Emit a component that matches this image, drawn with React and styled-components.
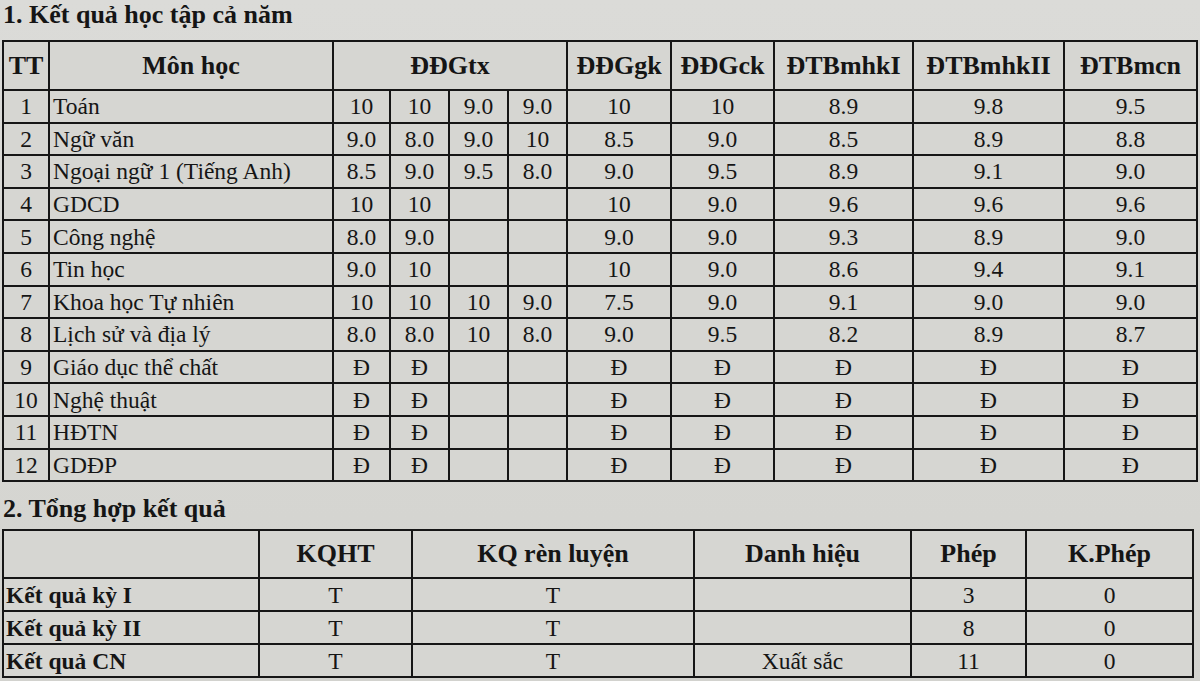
import React from 'react';
import styled, { createGlobalStyle } from 'styled-components';

const GlobalStyle = createGlobalStyle`
  html, body {
    margin: 0;
    padding: 0;
    background: #d8d8d4;
  }
  body {
    font-family: "Liberation Serif", "Times New Roman", serif;
    color: #151515;
    height: 681px;
    overflow: hidden;
  }
`;

const serif = `"Liberation Serif", "Times New Roman", serif`;

const Page = styled.div`
  display: flex;
  flex-direction: column;
  padding: 0 0 0 2px;
  background: linear-gradient(180deg, #dbdbd8 0%, #d7d7d3 60%, #d2d2ce 100%);
  height: 681px;
`;

const Title = styled.h2`
  margin: ${p => p.$top || 0}px 0 0 1px;
  font-family: ${serif};
  font-size: 26px;
  line-height: 30px;
  font-weight: bold;
  height: 30px;
`;

const Table = styled.table`
  border-collapse: collapse;
  table-layout: fixed;
  width: ${p => p.$width}px;
  margin-top: ${p => p.$top}px;
  background: #d6d6d2;
  font-family: ${serif};
  color: #151515;
`;

const Row = styled.tr`
  height: ${p => p.$h}px;
`;

const Th = styled.th`
  border: 2px solid #161616;
  font-family: ${serif};
  font-size: 26px;
  font-weight: bold;
  padding: 0;
  text-align: center;
  white-space: nowrap;
  overflow: hidden;
`;

const Td = styled.td`
  border: 2px solid #161616;
  font-family: ${serif};
  font-size: 23.5px;
  font-weight: ${p => (p.$bold ? 'bold' : 'normal')};
  padding: 0 0 0 ${p => p.$pad || 0}px;
  text-align: ${p => (p.$pad ? 'left' : 'center')};
  white-space: nowrap;
  overflow: hidden;
  line-height: 26px;
`;

const cols1 = [46, 284, 57, 59, 59, 59, 104, 103, 139, 151, 133];
const cols2 = [256, 153, 282, 217, 115, 167];

const grades = [
  ['1', 'Toán', ['10', '10', '9.0', '9.0'], '10', '10', '8.9', '9.8', '9.5'],
  ['2', 'Ngữ văn', ['9.0', '8.0', '9.0', '10'], '8.5', '9.0', '8.5', '8.9', '8.8'],
  ['3', 'Ngoại ngữ 1 (Tiếng Anh)', ['8.5', '9.0', '9.5', '8.0'], '9.0', '9.5', '8.9', '9.1', '9.0'],
  ['4', 'GDCD', ['10', '10', '', ''], '10', '9.0', '9.6', '9.6', '9.6'],
  ['5', 'Công nghệ', ['8.0', '9.0', '', ''], '9.0', '9.0', '9.3', '8.9', '9.0'],
  ['6', 'Tin học', ['9.0', '10', '', ''], '10', '9.0', '8.6', '9.4', '9.1'],
  ['7', 'Khoa học Tự nhiên', ['10', '10', '10', '9.0'], '7.5', '9.0', '9.1', '9.0', '9.0'],
  ['8', 'Lịch sử và địa lý', ['8.0', '8.0', '10', '8.0'], '9.0', '9.5', '8.2', '8.9', '8.7'],
  ['9', 'Giáo dục thể chất', ['Đ', 'Đ', '', ''], 'Đ', 'Đ', 'Đ', 'Đ', 'Đ'],
  ['10', 'Nghệ thuật', ['Đ', 'Đ', '', ''], 'Đ', 'Đ', 'Đ', 'Đ', 'Đ'],
  ['11', 'HĐTN', ['Đ', 'Đ', '', ''], 'Đ', 'Đ', 'Đ', 'Đ', 'Đ'],
  ['12', 'GDĐP', ['Đ', 'Đ', '', ''], 'Đ', 'Đ', 'Đ', 'Đ', 'Đ'],
];

const summary = [
  ['Kết quả kỳ I', 'T', 'T', '', '3', '0'],
  ['Kết quả kỳ II', 'T', 'T', '', '8', '0'],
  ['Kết quả CN', 'T', 'T', 'Xuất sắc', '11', '0'],
];

export default function App() {
  return (
    <Page>
      <GlobalStyle />
      <Title>1. Kết quả học tập cả năm</Title>
      <Table $width={1194} $top={10}>
        <colgroup>
          {cols1.map((w, i) => <col key={i} style={{ width: w }} />)}
        </colgroup>
        <thead>
          <Row $h={49}>
            <Th>TT</Th>
            <Th>Môn học</Th>
            <Th colSpan={4}>ĐĐGtx</Th>
            <Th>ĐĐGgk</Th>
            <Th>ĐĐGck</Th>
            <Th>ĐTBmhkI</Th>
            <Th>ĐTBmhkII</Th>
            <Th>ĐTBmcn</Th>
          </Row>
        </thead>
        <tbody>
          {grades.map(([n, name, tx, gk, ck, k1, k2, cn]) => (
            <Row key={n} $h={32.6}>
              <Td>{n}</Td>
              <Td $pad={3}>{name}</Td>
              {tx.map((v, i) => <Td key={i}>{v}</Td>)}
              <Td>{gk}</Td>
              <Td>{ck}</Td>
              <Td>{k1}</Td>
              <Td>{k2}</Td>
              <Td>{cn}</Td>
            </Row>
          ))}
        </tbody>
      </Table>

      <Title $top={12}>2. Tổng hợp kết quả</Title>
      <Table $width={1190} $top={5}>
        <colgroup>
          {cols2.map((w, i) => <col key={i} style={{ width: w }} />)}
        </colgroup>
        <thead>
          <Row $h={48}>
            <Th></Th>
            <Th>KQHT</Th>
            <Th>KQ rèn luyện</Th>
            <Th>Danh hiệu</Th>
            <Th>Phép</Th>
            <Th>K.Phép</Th>
          </Row>
        </thead>
        <tbody>
          {summary.map(([label, ...vals]) => (
            <Row key={label} $h={33}>
              <Td $pad={2} $bold>{label}</Td>
              {vals.map((v, i) => <Td key={i}>{v}</Td>)}
            </Row>
          ))}
        </tbody>
      </Table>
    </Page>
  );
}
